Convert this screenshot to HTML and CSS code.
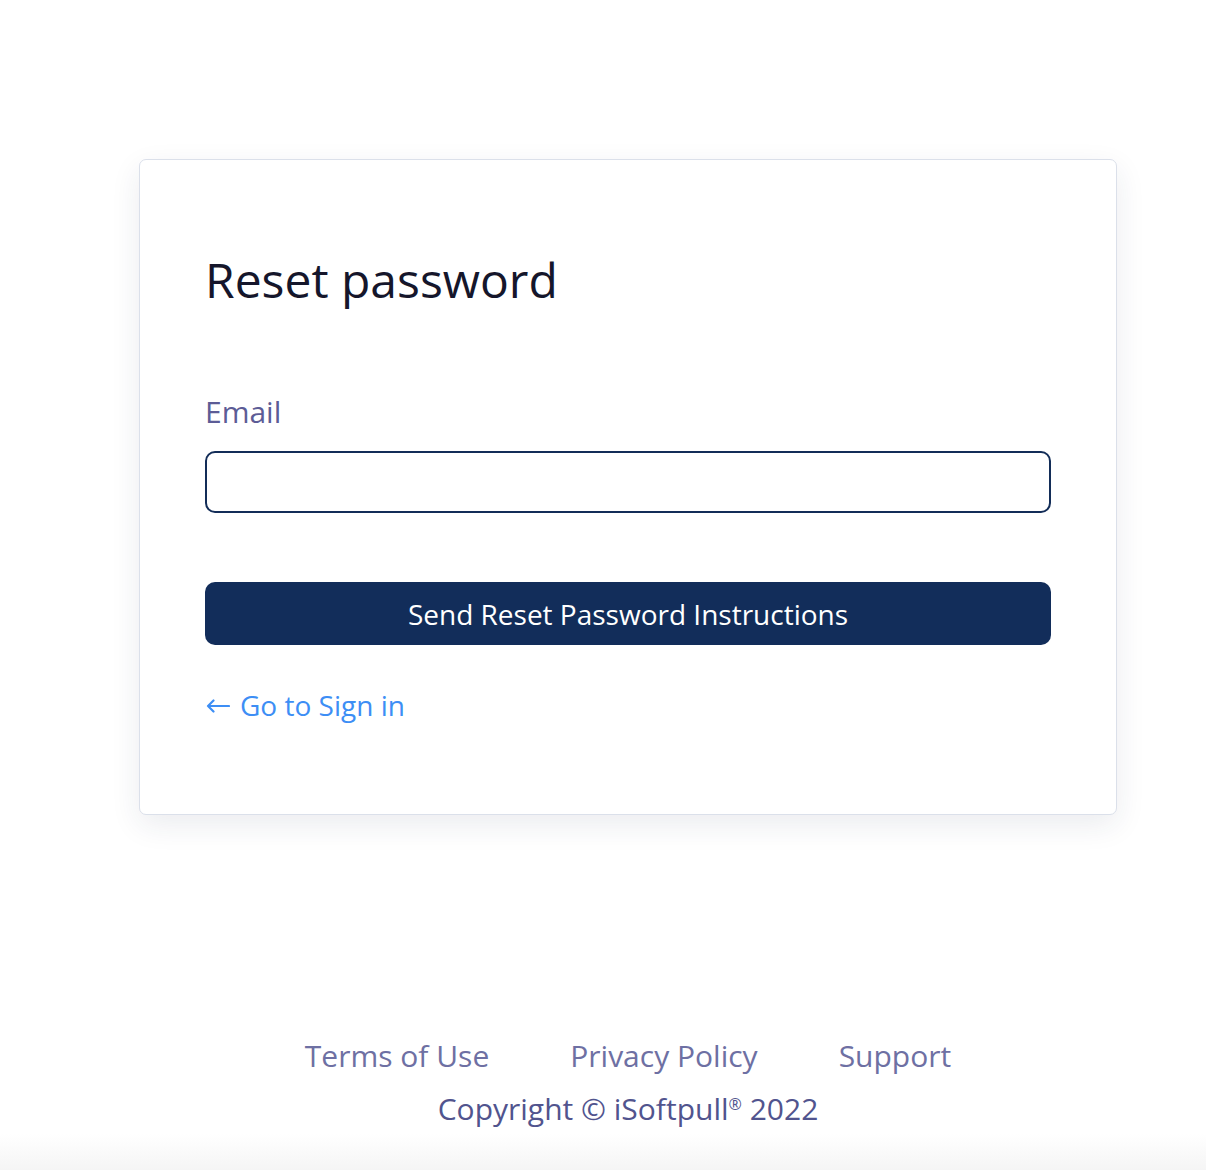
FILE: index.html
```html
<!DOCTYPE html>
<html lang="en">
<head>
    <meta charset="UTF-8">
    <meta name="viewport" content="width=device-width, initial-scale=1.0">
    <title>Reset password</title>
    <link rel="stylesheet" href="styles.css">
</head>
<body>
    <div class="page">
        <div class="card">
            <h1 class="card-title">Reset password</h1>
            <form class="reset-form">
                <label class="field-label" for="email">Email</label>
                <input class="field-input" type="email" id="email">
                <button class="submit-btn" type="button">Send Reset Password Instructions</button>
            </form>
            <a class="back-link" href="#">
                <svg class="back-arrow" width="24" height="14" viewBox="0 0 24 14" fill="none" stroke="currentColor" stroke-width="2.2" stroke-linecap="round" stroke-linejoin="round">
                    <path d="M23 7H2M7.5 1.5L2 7l5.5 5.5"/>
                </svg>
                Go to Sign in
            </a>
        </div>

        <footer class="footer">
            <ul class="footer-links">
                <li><a href="#">Terms of Use</a></li>
                <li><a href="#">Privacy Policy</a></li>
                <li><a href="#">Support</a></li>
            </ul>
            <p class="copyright">Copyright &copy; iSoftpull<sup>&reg;</sup> 2022</p>
        </footer>
    </div>
</body>
</html>
```

FILE: styles.css
```css
body {
    font-family: 'Open Sans', 'Noto Sans', sans-serif;
    margin: 0;
    padding: 0;
    min-height: 1170px;
    background: linear-gradient(to bottom, #fff calc(100% - 36px), #f5f5f5);
}

.page {
    width: 978px;
    margin-left: 139px;
    padding-top: 159px;
}

.card {
    background-color: #fff;
    border: 1px solid #dbe0ea;
    border-radius: 7px;
    box-shadow: 0 10px 30px rgba(30, 40, 80, 0.09);
    padding: 86px 65px 88px 65px;
}

.card-title {
    margin: 0;
    font-size: 48px;
    font-weight: 400;
    line-height: 68px;
    color: #15162b;
}

.reset-form {
    display: flex;
    flex-direction: column;
    margin-top: 77px;
}

.field-label {
    font-size: 30px;
    line-height: 41px;
    color: #5c5c96;
}

.field-input {
    margin-top: 19px;
    height: 62px;
    box-sizing: border-box;
    border: 2px solid #132d58;
    border-radius: 10px;
    padding: 0 16px;
    font-family: inherit;
    font-size: 26px;
    outline: none;
}

.submit-btn {
    margin-top: 69px;
    height: 63px;
    border: none;
    border-radius: 10px;
    background-color: #122d5a;
    color: #fff;
    font-family: inherit;
    font-size: 28px;
    cursor: pointer;
}

.back-link {
    display: inline-flex;
    align-items: center;
    gap: 10px;
    margin-top: 40px;
    font-size: 28px;
    line-height: 41px;
    color: #3d8ef5;
    text-decoration: none;
}

.back-arrow {
    margin-left: 1px;
    margin-top: 1px;
}

.footer {
    margin-top: 220px;
    text-align: center;
}

.footer-links {
    list-style: none;
    margin: 0;
    padding: 0;
    display: flex;
    justify-content: center;
    gap: 81px;
}

.footer-links a {
    font-size: 30px;
    line-height: 41px;
    color: #6e70a3;
    text-decoration: none;
}

.copyright {
    margin: 12px 0 0;
    font-size: 30px;
    line-height: 41px;
    color: #51548e;
}

.copyright sup {
    font-size: 16px;
    line-height: 0;
    vertical-align: 10px;
}
```
